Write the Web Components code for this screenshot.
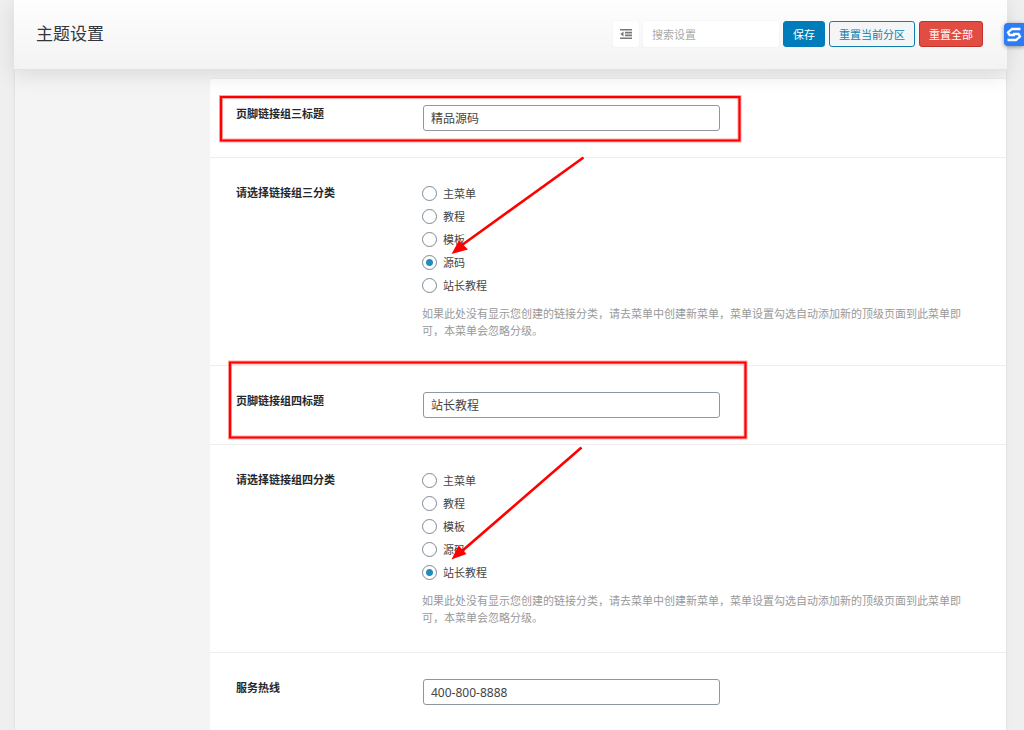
<!DOCTYPE html>
<html lang="zh-CN">
<head>
<meta charset="utf-8">
<title>主题设置</title>
<style>
html{scrollbar-width:none}
body{margin:0;background:#efefef;color:#555;font-family:"Noto Sans","Noto Sans CJK SC",sans-serif;font-size:11px;line-height:17px}
</style>
</head>
<body>
<theme-options>
  <options-header slot="header" heading="主题设置"></options-header>
  <option-row label="页脚链接组三标题" for-text value="精品源码"></option-row>
  <option-row label="请选择链接组三分类">
    <radio-list name="group3" label="请选择链接组三分类" options="主菜单,教程,模板,源码,站长教程" value="源码"></radio-list>
    <field-note>如果此处没有显示您创建的链接分类，请去菜单中创建新菜单，菜单设置勾选自动添加新的顶级页面到此菜单即可，本菜单会忽略分级。</field-note>
  </option-row>
  <option-row label="页脚链接组四标题" for-text value="站长教程"></option-row>
  <option-row label="请选择链接组四分类">
    <radio-list name="group4" label="请选择链接组四分类" options="主菜单,教程,模板,源码,站长教程" value="站长教程"></radio-list>
    <field-note>如果此处没有显示您创建的链接分类，请去菜单中创建新菜单，菜单设置勾选自动添加新的顶级页面到此菜单即可，本菜单会忽略分级。</field-note>
  </option-row>
  <option-row label="服务热线" for-text value="400-800-8888"></option-row>
</theme-options>
<guide-marks></guide-marks>
<side-badge></side-badge>
<script>
class Base extends HTMLElement{
  render(html){
    if(!this.shadowRoot)this.attachShadow({mode:'open'});
    this.shadowRoot.innerHTML='<style>*{box-sizing:border-box}</style>'+html;
  }
}
customElements.define('theme-options',class extends Base{
  connectedCallback(){this.render(`<style>
    :host{display:block;margin:0 17px 0 14px}
    .body{display:flex;border:1px solid #e4e4e4;border-width:0 1px;background:#f4f4f4;min-height:calc(100vh - 70px);box-shadow:0 0 8px rgba(0,0,0,.03)}
    nav{flex:0 0 195px}
    main{flex:1;min-width:0;padding-top:8px;background:linear-gradient(#f4f4f4 8px,#fff 8px)}
    .rows{border-top:1px solid #eee}
    </style><slot name="header"></slot>
    <div class="body"><nav aria-label="分区"></nav><main><div class="rows"><slot></slot></div></main></div>`);}
});
customElements.define('options-header',class extends Base{
  connectedCallback(){this.render(`<style>
    :host{display:flex;position:sticky;top:0;z-index:2;height:70px;box-sizing:border-box;align-items:center;justify-content:space-between;padding:0 24px 1px 22px;background:linear-gradient(#fefefe,#f3f3f3);border-bottom:1px solid #e2e2e2;box-shadow:0 5px 20px rgba(0,0,0,.11)}
    h1{margin:0;font-size:17px;line-height:26px;font-weight:400;color:#32373c}
    form{display:flex;gap:4px;align-items:center}
    button,input{height:26px;margin:0;font:inherit;border-radius:3px;border:1px solid transparent}
    button{padding:0 9px;white-space:nowrap}
    .toggle{width:26px;padding:0;display:grid;place-items:center;background:#fff;color:#777;box-shadow:0 0 2px rgba(0,0,0,.06)}
    input{width:136px;padding:0 8px;background:#fff;color:#555;box-shadow:0 0 2px rgba(0,0,0,.06);outline:0}
    input::placeholder{color:#aaa;opacity:1}
    .save{background:#007cba;border-color:#007cba;color:#fff}
    .section{background:#f3f5f6;border-color:#0f7fae;color:#0f7fae}
    .all{background:#e14d43;border-color:#c4302a;color:#fff}
    </style><h1></h1><form>
    <button type="button" class="toggle" aria-label="展开全部"><svg width="12" height="10" viewBox="0 0 12 10" fill="currentColor"><path d="M0 0h12v1.600H0zM5 2.800h7v1.600H5zM5 5.600h7v1.600H5zM0 8.400h12V10H0zM3.500 2.500v5L.3 5z"/></svg></button>
    <input type="text" aria-label="搜索设置" placeholder="搜索设置">
    <button type="button" class="save">保存</button>
    <button type="button" class="section">重置当前分区</button>
    <button type="button" class="all">重置全部</button></form>`);
    this.shadowRoot.querySelector('h1').textContent=this.getAttribute('heading');}
});
customElements.define('option-row',class extends Base{
  connectedCallback(){
    const text=this.hasAttribute('for-text'),l=this.getAttribute('label');
    this.render(`<style>
    :host{display:flex;padding:26px;border-bottom:1px solid #eee}
    :host(:last-of-type){border-bottom:0}
    .title{flex:0 0 186px;font-weight:700;color:#23282d}
    .field{flex:1;min-width:0}
    input{display:block;width:100%;max-width:297px;height:26px;margin:0 0 0 1px;padding:0 7px;border:1px solid #8f979f;border-radius:3px;background:#fff;color:#444;font:12px/24px "Noto Sans","Noto Sans CJK SC",sans-serif;outline:0}
    </style>${text?`<label class="title" for="f">${l}</label>`:`<div class="title">${l}</div>`}
    <div class="field">${text?`<input id="f" type="text" value="${this.getAttribute('value')}">`:'<slot></slot>'}</div>`);}
});
customElements.define('radio-list',class extends Base{
  connectedCallback(){
    const n=this.getAttribute('name'),v=this.getAttribute('value');
    this.render(`<style>
    :host{display:block}
    .list{display:grid;gap:5px;justify-items:start}
    label{display:flex;align-items:center;gap:6px;height:18px;color:#444}
    input{appearance:none;width:15px;height:15px;margin:0;border:1px solid #7e8993;border-radius:50%;background:#fff}
    input:checked{background:radial-gradient(circle,#1e8cbe 3px,#fff 4px)}
    </style><div class="list" role="radiogroup" aria-label="${this.getAttribute('label')}">${this.getAttribute('options').split(',').map(o=>
      `<label><input type="radio" name="${n}" value="${o}"${o===v?' checked':''}>${o}</label>`).join('')}</div>`);}
});
customElements.define('field-note',class extends Base{
  connectedCallback(){this.render(`<style>
    :host{display:block;margin-top:11px;max-width:49em;color:#999}
    </style><slot></slot>`);}
});
/* Tutorial marks: red frames and arrows drawn over the form. */
customElements.define('guide-marks',class extends Base{
  connectedCallback(){this.render(`<style>
    :host{position:absolute;top:0;left:0;z-index:3;pointer-events:none}
    svg{display:block}
    </style><svg width="760" height="600" viewBox="0 0 760 600" fill="none" stroke="#f00" aria-hidden="true">
    <g stroke-opacity=".35" stroke-width="4"><path d="M221 97H739.500V140.500H221z"/><path d="M230 362.500H745.500V437.500H230z"/></g>
    <g stroke-width="2.200"><path d="M221 97H739.500V140.500H221z"/><path d="M230 362.500H745.500V437.500H230z"/></g>
    <g stroke-width="2.600"><path d="M583.500 157.500L462 245"/><path d="M581.500 447.500L462 551"/></g>
    <g fill="#f00" stroke="none"><path d="M451.500 254L459 240.500L468 249.500z"/><path d="M451.500 559.500L458.500 545.500L466.500 554z"/></g>
    </svg>`);}
});
customElements.define('side-badge',class extends Base{
  connectedCallback(){this.render(`<style>
    :host{position:fixed;top:23px;right:0;z-index:4}
    button{display:block;width:20px;height:23px;padding:0;border:0;border-radius:4px 0 0 4px;background:#2b7cf6;box-shadow:0 1px 4px rgba(0,0,0,.4)}
    svg{display:block;margin:auto}
    </style><button type="button" aria-label="快捷工具"><svg width="18" height="17" viewBox="0 0 18 17" fill="none" stroke="#fff" stroke-width="2.300"><path d="M15.500 3H7L3 6.500L4.500 9H10"/><path d="M2.500 14H11L15 10.500L13.500 8H8"/></svg></button>`);}
});
</script>
</body>
</html>
